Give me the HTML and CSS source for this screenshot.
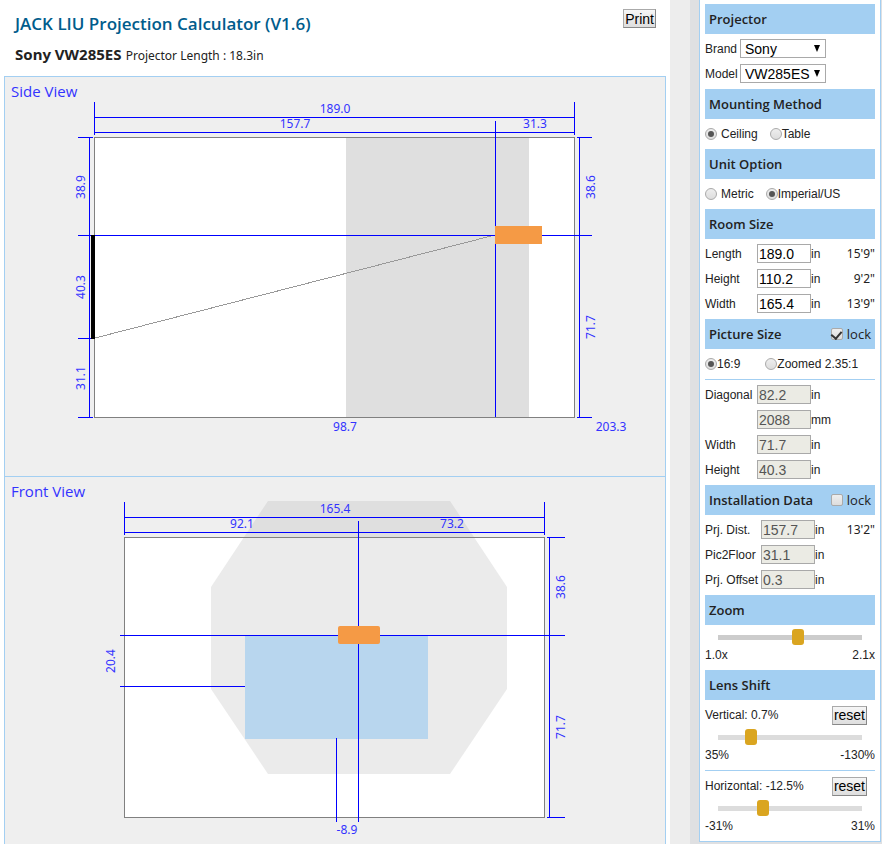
FILE: index.html
```html
<!DOCTYPE html>
<html lang="en">
<head>
<meta charset="utf-8">
<title>JACK LIU Projection Calculator</title>
<link rel="stylesheet" href="styles.css">
</head>
<body>
<div class="page">
  <main class="main">
    <header class="top">
      <div>
        <h1 class="title">JACK LIU Projection Calculator (V1.6)</h1>
        <p class="model"><strong>Sony VW285ES</strong> Projector Length : 18.3in</p>
      </div>
      <button class="btn" type="button">Print</button>
    </header>
    <section class="view">
      <h2>Side View</h2>
      <svg viewBox="5 77 660 399" role="img" aria-label="Side view of the room">
        <rect x="94" y="137" width="481" height="281" fill="#fff"/>
        <rect x="346" y="137" width="183" height="281" fill="#dfdfdf"/>
        <rect class="room" x="94.5" y="137.5" width="480" height="280"/>
        <path class="ray" d="M95 338L495 235"/>
        <path class="dim" d="M94.5 102V135M574.5 102V135M94 117.5H575M94 132.5H575M495.5 121V417M78 235.5H592M89.5 137V418M78 137.5H93M78 338.5H93M78 417.5H93M579.5 137V418M577 137.5H592M577 417.5H592"/>
        <rect x="91" y="235" width="4" height="104"/>
        <rect x="495" y="226" width="47" height="18" fill="#f59a45"/>
        <text x="335" y="113">189.0</text>
        <text x="295" y="128">157.7</text>
        <text x="535" y="128">31.3</text>
        <text x="345" y="431">98.7</text>
        <text x="611" y="431">203.3</text>
        <text transform="translate(85 187) rotate(-90)">38.9</text>
        <text transform="translate(85 287) rotate(-90)">40.3</text>
        <text transform="translate(85 378) rotate(-90)">31.1</text>
        <text transform="translate(595 187) rotate(-90)">38.6</text>
        <text transform="translate(595 327) rotate(-90)">71.7</text>
      </svg>
    </section>
    <section class="view">
      <h2>Front View</h2>
      <svg viewBox="5 477 660 367" role="img" aria-label="Front view of the room">
        <rect x="124" y="537" width="421" height="281" fill="#fff"/>
        <path d="M268 501H450L507 587V689L450 774H268L211 689V587Z" fill="#afafaf" fill-opacity=".25"/>
        <rect x="245" y="635" width="183" height="104" fill="#b8d6ee"/>
        <rect class="room" x="124.5" y="537.5" width="420" height="280"/>
        <path class="dim" d="M124.5 502V535M544.5 502V535M124 517.5H545M124 532.5H545M358.5 521V822M336.5 738V822M120 635.5H565M120 686.5H245M549.5 537V818M547 537.5H565M547 817.5H565"/>
        <rect x="338" y="626" width="42" height="18" rx="2" fill="#f59a45"/>
        <text x="335" y="513">165.4</text>
        <text x="242" y="528">92.1</text>
        <text x="452" y="528">73.2</text>
        <text x="347" y="834">-8.9</text>
        <text transform="translate(115 661) rotate(-90)">20.4</text>
        <text transform="translate(565 587) rotate(-90)">38.6</text>
        <text transform="translate(565 727) rotate(-90)">71.7</text>
      </svg>
    </section>
  </main>
  <aside class="side">
    <form class="panel">
      <h3>Projector</h3>
      <div class="rows">
        <div class="row pick"><label for="brand">Brand</label><span class="sel"><select id="brand"><option>Sony</option></select></span></div>
        <div class="row pick"><label for="model">Model</label><span class="sel"><select id="model"><option>VW285ES</option></select></span></div>
      </div>
      <h3>Mounting Method</h3>
      <div class="radios">
        <label class="spaced"><input type="radio" name="mount" checked>Ceiling</label>
        <label><input type="radio" name="mount">Table</label>
      </div>
      <h3>Unit Option</h3>
      <div class="radios">
        <label class="spaced"><input type="radio" name="unit">Metric</label>
        <label><input type="radio" name="unit" checked>Imperial/US</label>
      </div>
      <h3>Room Size</h3>
      <div class="rows">
        <div class="row"><label for="rl">Length</label><input id="rl" type="text" value="189.0"><span>in</span><output>15'9"</output></div>
        <div class="row"><label for="rh">Height</label><input id="rh" type="text" value="110.2"><span>in</span><output>9'2"</output></div>
        <div class="row"><label for="rw">Width</label><input id="rw" type="text" value="165.4"><span>in</span><output>13'9"</output></div>
      </div>
      <h3>Picture Size <label class="lock"><input type="checkbox" checked>lock</label></h3>
      <div class="radios wide">
        <label><input type="radio" name="ratio" checked>16:9</label>
        <label><input type="radio" name="ratio">Zoomed 2.35:1</label>
      </div>
      <div class="rows ruled">
        <div class="row"><label for="pd">Diagonal</label><input id="pd" type="text" value="82.2" disabled><span>in</span></div>
        <div class="row"><span></span><input type="text" value="2088" aria-label="Diagonal in mm" disabled><span>mm</span></div>
        <div class="row"><label for="pw">Width</label><input id="pw" type="text" value="71.7" disabled><span>in</span></div>
        <div class="row"><label for="ph">Height</label><input id="ph" type="text" value="40.3" disabled><span>in</span></div>
      </div>
      <h3>Installation Data <label class="lock"><input type="checkbox">lock</label></h3>
      <div class="rows install">
        <div class="row"><label for="id">Prj. Dist.</label><input id="id" type="text" value="157.7" disabled><span>in</span><output>13'2"</output></div>
        <div class="row"><label for="ip">Pic2Floor</label><input id="ip" type="text" value="31.1" disabled><span>in</span></div>
        <div class="row"><label for="io">Prj. Offset</label><input id="io" type="text" value="0.3" disabled><span>in</span></div>
      </div>
      <h3>Zoom</h3>
      <div class="slider zoom">
        <input type="range" min="0" max="100" value="56" aria-label="Zoom">
        <div class="ends"><span>1.0x</span><span>2.1x</span></div>
      </div>
      <h3>Lens Shift</h3>
      <div class="shift">
        <div class="reading"><label for="sv">Vertical: 0.7%</label><button class="btn" type="button">reset</button></div>
        <div class="slider">
          <input id="sv" type="range" min="0" max="200" value="41">
          <div class="ends"><span>35%</span><span>-130%</span></div>
        </div>
      </div>
      <div class="shift ruled">
        <div class="reading"><label for="sh">Horizontal: -12.5%</label><button class="btn" type="button">reset</button></div>
        <div class="slider">
          <input id="sh" type="range" min="0" max="200" value="59">
          <div class="ends"><span>-31%</span><span>31%</span></div>
        </div>
      </div>
    </form>
  </aside>
</div>
</body>
</html>
```
FILE: styles.css
```css
* { box-sizing: border-box; }
body {
  margin: 0;
  background: #ededed;
  color: #222;
  font: 12px/16px "Liberation Sans", Arial, sans-serif;
}
h1, h2, h3, p { margin: 0; }
.page { display: flex; gap: 20px; }

.main { flex: 1; min-width: 0; background: #fff; padding: 0 4px; }
.top {
  display: flex;
  justify-content: space-between;
  align-items: flex-start;
  height: 76px;
  padding: 9px 10px 0 11px;
}
.title { font: 600 17px/30px "Open Sans", sans-serif; color: #005c8c; }
.model { font: 12px/30px "Noto Sans", sans-serif; }
.model strong { margin-right: 1px; font: bold 15px/30px "Noto Sans", sans-serif; }

.btn {
  height: 19px;
  padding: 0 1px;
  border: 1px solid #999;
  border-color: #aaa #888 #888 #aaa;
  background: linear-gradient(#f6f6f6, #dedede);
  color: #000;
  font: 14px/16px "Liberation Sans", Arial, sans-serif;
}

.view {
  position: relative;
  background: #efefef;
  border: solid #a3cff2;
  border-width: 1px 1px 0;
}
.view h2 {
  position: absolute;
  left: 6px;
  top: 4px;
  font: 15px/20px "Open Sans", sans-serif;
  color: #33f;
}
.view svg { display: block; width: 100%; height: auto; }
.view text { font: 12px "Noto Sans", sans-serif; fill: #33f; text-anchor: middle; }
.room { fill: none; stroke: #808080; shape-rendering: crispEdges; }
.dim { fill: none; stroke: #00f; shape-rendering: crispEdges; }
.ray { stroke: #999; shape-rendering: crispEdges; }

.side { flex: none; background: #dfe0e2; padding: 0 1px 2px 9px; }
.panel {
  width: 182px;
  background: #fff;
  border: solid #a3cff2;
  border-width: 0 1px 1px;
  padding: 4px 5px 5px;
}
.panel h3 {
  display: flex;
  justify-content: space-between;
  padding: 0 4px;
  background: #a3cff2;
  font: 600 13px/30px "Open Sans", sans-serif;
}
.lock { display: flex; align-items: center; gap: 4px; font-weight: normal; }

.rows { padding: 2px 0 3px; }
.ruled { border-top: 1px solid #a3cff2; }
.row {
  display: grid;
  grid-template-columns: 52px 54px auto 1fr;
  align-items: center;
  height: 25px;
}
.install .row { grid-template-columns: 56px 54px auto 1fr; }
.row output { text-align: right; font-family: "Noto Sans", sans-serif; }
.row input {
  width: 54px;
  height: 19px;
  padding: 0 1px;
  border: 1px solid #a9a9a9;
  background: #fff;
  color: #000;
  font: 14px "Liberation Sans", Arial, sans-serif;
}
.row input:disabled { background: #ebebe4; color: #555; }

.pick { display: flex; justify-content: space-between; }
.pick label { flex: none; }
.sel { position: relative; width: 86px; margin-right: 49px; }
.sel::after {
  content: "";
  position: absolute;
  right: 6px;
  top: 6px;
  border: solid transparent;
  border-width: 7px 3px 0;
  border-top-color: #000;
  pointer-events: none;
}
.sel select {
  display: block;
  appearance: none;
  width: 100%;
  height: 19px;
  padding: 0 4px;
  border: 1px solid #a9a9a9;
  border-radius: 0;
  background: #fff;
  color: #000;
  font: 14px "Liberation Sans", Arial, sans-serif;
}

.radios { display: flex; gap: 12px; height: 30px; padding-bottom: 1px; align-items: center; }
.radios.wide { gap: 25px; }
.radios label { display: flex; align-items: center; }
.spaced { gap: 4px; }
input[type="radio"], input[type="checkbox"] {
  appearance: none;
  display: grid;
  place-items: center;
  width: 12px;
  height: 12px;
  margin: 0;
  border: 1px solid #aaa;
  background: linear-gradient(#eee, #ddd);
}
input[type="radio"] { border-radius: 50%; }
input[type="radio"]:checked::after {
  content: "";
  width: 6px;
  height: 6px;
  border-radius: 50%;
  background: #555;
}
input[type="checkbox"] { border-radius: 2px; }
input[type="checkbox"]:checked::after {
  content: "";
  width: 5px;
  height: 8px;
  margin-bottom: 2px;
  border: solid #333;
  border-width: 0 2px 2px 0;
  transform: rotate(40deg);
}

.slider input {
  appearance: none;
  display: block;
  width: 144px;
  height: 16px;
  margin: 0 13px;
  background: linear-gradient(#dcdcdc, #dcdcdc) center / 100% 5px no-repeat;
  border-radius: 3px;
}
.zoom { padding: 4px 0 7px; }
.zoom input { background-image: linear-gradient(#ccc, #ccc); }
.slider input::-webkit-slider-thumb {
  appearance: none;
  width: 12px;
  height: 16px;
  border-radius: 3px;
  background: #daa520;
}
.ends { display: flex; justify-content: space-between; padding-top: 2px; }
.shift { height: 70px; padding-top: 5px; }
.shift.ruled { height: 66px; }
.reading {
  display: flex;
  justify-content: space-between;
  align-items: center;
  height: 20px;
  margin-bottom: 4px;
  padding-right: 8px;
}
```
